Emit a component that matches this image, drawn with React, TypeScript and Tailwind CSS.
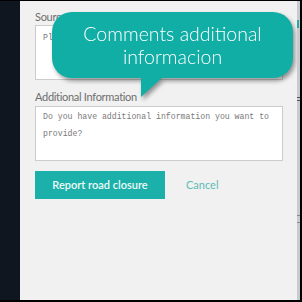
import React from "react";

export default function App() {
  return (
    <div className="w-[302px] h-[302px] bg-black pt-[1px] pb-[2px] pr-[2px] flex overflow-hidden">
      <div className="w-[20px] h-full bg-[#0f1620]" />
      <div className="relative flex-1 h-full bg-[#f1f1f1] pl-[15px] pt-[8px] flex flex-col" style={{ fontFamily: "Lato, 'Open Sans', sans-serif" }}>
        <div className="h-[16px] leading-[16px] text-[11px] tracking-[-0.3px] text-[#6e6e6e] whitespace-nowrap">Source (Where did you hear about it?)</div>
        <div className="mt-[0px] w-[248px] h-[55px] bg-white border border-[#cccccc] px-[7px] pt-[3px] text-[8.2px] leading-[17px] text-[#7a7a7a]" style={{ fontFamily: "'Liberation Mono', monospace" }}>
          Please enter a link or a reference
        </div>
        <div className="mt-[9px] h-[16px] leading-[16px] text-[11px] tracking-[-0.3px] text-[#6e6e6e] whitespace-nowrap">Additional Information</div>
        <div className="mt-[1px] w-[248px] h-[55px] bg-white border border-[#cccccc] px-[7px] pt-[1px] text-[8.2px] leading-[17px] text-[#7a7a7a]" style={{ fontFamily: "'Liberation Mono', monospace" }}>
          Do you have additional information you want to provide?
        </div>
        <div className="mt-[10px] flex items-center">
          <div className="w-[130px] h-[28px] bg-[#1bb0a9] flex items-center justify-center text-[11px] font-semibold text-[#eefaf9]">Report road closure</div>
          <div className="ml-[21px] text-[11px] text-[#5cbcb6]">Cancel</div>
        </div>

        <div className="absolute left-[32px] top-[11px] drop-shadow-[2px_3px_2px_rgba(0,0,0,0.4)]">
          <div className="w-[241px] h-[66px] rounded-[20px] bg-[#11aea6] flex flex-col items-center justify-center text-white text-[19.5px] leading-[23px] font-light">
            <div>Comments additional</div>
            <div>informacion</div>
          </div>
          <svg className="absolute left-[89px] top-[64px]" width="23" height="22" viewBox="0 0 23 22">
            <polygon points="0,0 23,0 0,21" fill="#11aea6" />
          </svg>
        </div>
      </div>
      <div className="relative w-[3px] h-full bg-[#c8cbce]">
        <div className="absolute left-0 top-[19px] w-[2px] h-[8px] bg-[#2aa9a2]" />
        <div className="absolute left-0 top-[96px] w-[3px] h-[1px] bg-[#555]" />
        <div className="absolute left-0 top-[99px] w-[3px] h-[1px] bg-[#555]" />
        <div className="absolute left-0 top-[214px] w-[3px] h-[1px] bg-[#888]" />
        <div className="absolute left-0 top-[221px] w-[3px] h-[1px] bg-[#888]" />
      </div>
    </div>
  );
}
